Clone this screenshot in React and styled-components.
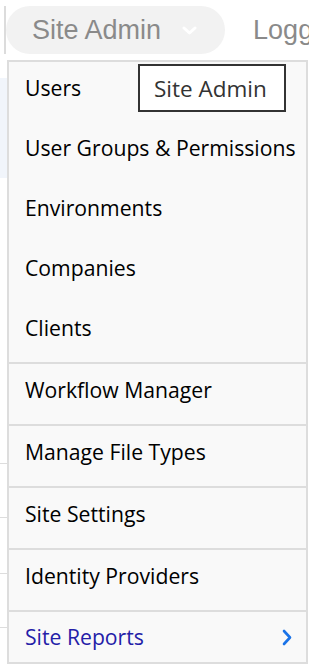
import React from "react";
import styled, { createGlobalStyle } from "styled-components";

const GlobalStyle = createGlobalStyle`
  html, body { margin: 0; padding: 0; background: #ffffff; }
  body { overflow: hidden; }
  * { box-sizing: border-box; }
`;

const Page = styled.div`
  width: 309px;
  height: 665px;
  overflow: hidden;
  background: #ffffff;
`;

const NavBar = styled.div`
  height: 60px;
  display: flex;
  align-items: center;
  padding-left: 4px;
  white-space: nowrap;
  font-family: "Liberation Sans", Arial, sans-serif;
`;

const NavDivider = styled.div`
  width: 2px;
  height: 48px;
  background: #dcdcdc;
  flex: none;
`;

const NavPill = styled.div`
  display: flex;
  align-items: center;
  gap: 21px;
  height: 48px;
  padding: 0 28px 0 26px;
  border-radius: 24px;
  background: #f2f2f2;
  color: #8a8a8a;
  font-size: 27px;
  flex: none;
`;

const NavLink = styled.div`
  margin-left: 28px;
  color: #8a8a8a;
  font-size: 27px;
  flex: none;
`;

const Body = styled.div`
  display: flex;
  align-items: flex-start;
`;

const BackdropStrip = styled.div`
  width: 7px;
  flex: none;
  display: flex;
  flex-direction: column;
`;

const BackdropBlock = styled.div`
  margin-top: 18px;
  height: 100px;
  background: #f1f5fb;
`;

const BackdropRule = styled.div`
  margin-top: ${(p) => p.$gap}px;
  height: 1px;
  background: #dddddd;
`;

const Menu = styled.div`
  position: relative;
  width: 301px;
  flex: none;
  border: 2px solid #dddddd;
  background: #f9f9f9;
  font-family: "Open Sans", "Noto Sans", sans-serif;
`;

const MenuItem = styled.div`
  height: ${(p) => (p.$short ? 50 : 60) + (p.$divided ? 2 : 0)}px;
  display: flex;
  align-items: center;
  justify-content: space-between;
  padding: 0 14px ${(p) => (p.$short ? 0 : 8)}px 16px;
  border-top: ${(p) => (p.$divided ? "2px solid #dddddd" : "none")};
  font-size: 21.2px;
  font-weight: 500;
  line-height: 24px;
  color: ${(p) => (p.$accent ? "#2420a8" : "#000000")};
  white-space: nowrap;
`;

const Tooltip = styled.div`
  position: absolute;
  top: 2px;
  left: 129px;
  width: 148px;
  height: 48px;
  display: flex;
  align-items: center;
  padding-left: 14px;
  border: 2px solid #333333;
  background: #ffffff;
  color: #333333;
  font-family: "Open Sans", "Noto Sans", sans-serif;
  font-size: 22.5px;
  white-space: nowrap;
`;

const ChevronDown = () => (
  <svg width="15" height="9" viewBox="0 0 15 9" fill="none">
    <polyline points="2,2 7.5,7 13,2" stroke="#ffffff" strokeWidth="3" strokeLinecap="round" strokeLinejoin="round" />
  </svg>
);

const ChevronRight = () => (
  <svg width="10" height="17" viewBox="0 0 10 17" fill="none">
    <polyline points="2,2 8,8.5 2,15" stroke="#1a73e8" strokeWidth="2.6" strokeLinecap="round" strokeLinejoin="round" />
  </svg>
);

const groupOne = ["Users", "User Groups & Permissions", "Environments", "Companies", "Clients"];
const groupTwo = ["Workflow Manager", "Manage File Types", "Site Settings", "Identity Providers"];

export default function App() {
  return (
    <Page>
      <GlobalStyle />
      <NavBar>
        <NavDivider />
        <NavPill>
          Site Admin
          <ChevronDown />
        </NavPill>
        <NavLink>Logged in</NavLink>
      </NavBar>
      <Body>
        <BackdropStrip>
          <BackdropBlock />
          <BackdropRule $gap={285} />
          <BackdropRule $gap={53} />
          <BackdropRule $gap={55} />
          <BackdropRule $gap={53} />
        </BackdropStrip>
        <Menu>
          {groupOne.map((label) => (
            <MenuItem key={label}>{label}</MenuItem>
          ))}
          {groupTwo.map((label) => (
            <MenuItem key={label} $divided>
              {label}
            </MenuItem>
          ))}
          <MenuItem $divided $accent $short>
            Site Reports
            <ChevronRight />
          </MenuItem>
          <Tooltip>Site Admin</Tooltip>
        </Menu>
      </Body>
    </Page>
  );
}
